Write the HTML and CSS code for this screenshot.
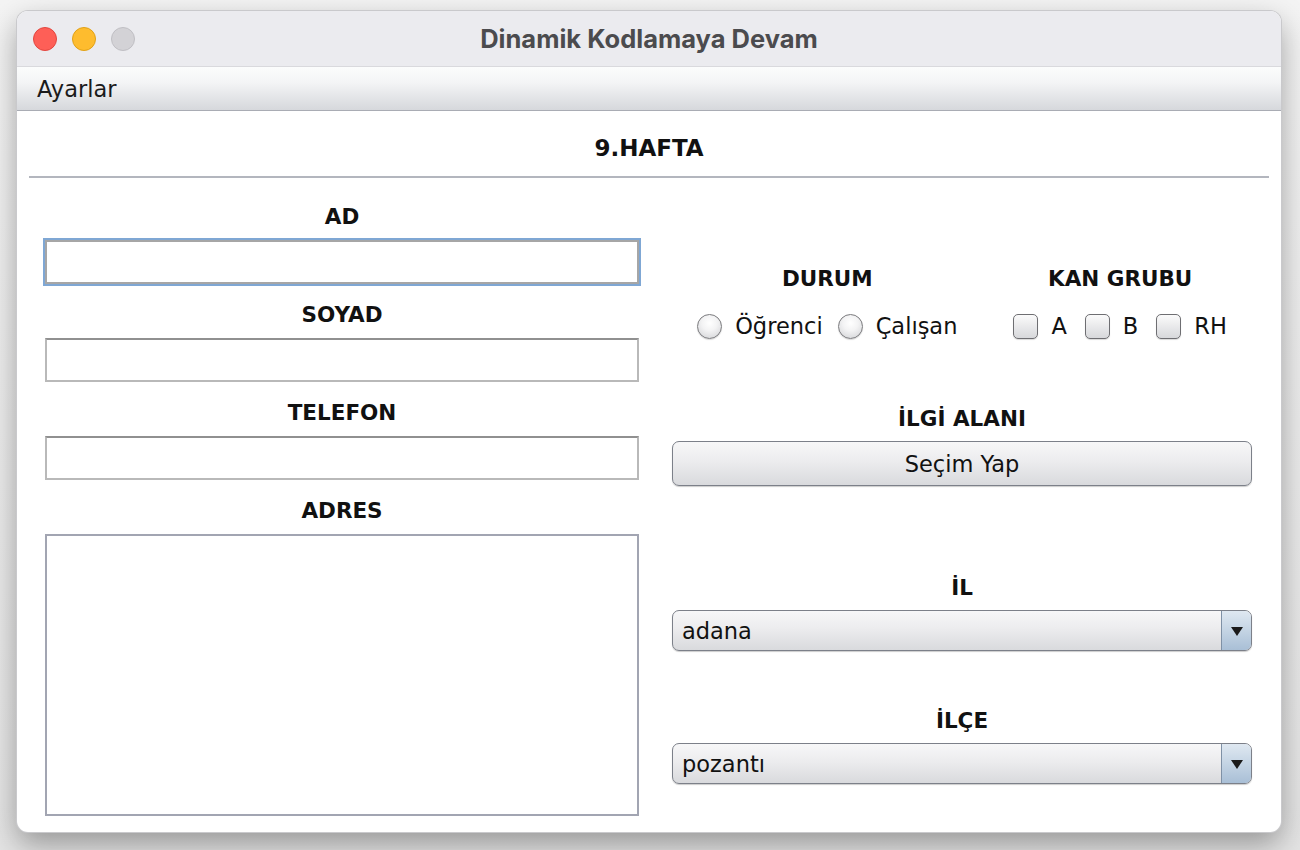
FILE: index.html
```html
<!DOCTYPE html>
<html lang="tr">
<head>
<meta charset="utf-8">
<title>Dinamik Kodlamaya Devam</title>
<link rel="stylesheet" href="styles.css">
</head>
<body>
<div class="window">
  <div class="titlebar">
    <div class="lights">
      <span class="light red"></span>
      <span class="light yellow"></span>
      <span class="light grey"></span>
    </div>
    <div class="title">Dinamik Kodlamaya Devam</div>
  </div>
  <div class="menubar"><span class="menu">Ayarlar</span></div>
  <div class="content">
    <div class="heading">9.HAFTA</div>
    <div class="rule"></div>
    <div class="grid">
      <div class="left">
        <div class="label">AD</div>
        <div class="field focused"></div>
        <div class="label">SOYAD</div>
        <div class="field"></div>
        <div class="label">TELEFON</div>
        <div class="field"></div>
        <div class="label">ADRES</div>
        <div class="area"></div>
      </div>
      <div class="right">
        <div class="groups">
          <div class="group">
            <div class="label">DURUM</div>
            <div class="opts">
              <span class="opt"><span class="radio"></span>Öğrenci</span>
              <span class="opt"><span class="radio"></span>Çalışan</span>
            </div>
          </div>
          <div class="group">
            <div class="label">KAN GRUBU</div>
            <div class="opts">
              <span class="opt"><span class="check"></span>A</span>
              <span class="opt"><span class="check"></span>B</span>
              <span class="opt"><span class="check"></span>RH</span>
            </div>
          </div>
        </div>
        <div class="label ilgi">İLGİ ALANI</div>
        <div class="button">Seçim Yap</div>
        <div class="label il">İL</div>
        <div class="combo"><span class="val">adana</span><span class="arrow"></span></div>
        <div class="label ilce">İLÇE</div>
        <div class="combo"><span class="val">pozantı</span><span class="arrow"></span></div>
      </div>
    </div>
  </div>
</div>
</body>
</html>
```
FILE: styles.css
```css
html, body {
  margin: 0;
  height: 100%;
}
body {
  background: linear-gradient(#f4f4f4, #e4e4e4);
  padding: 11px 19px 0 17px;
  box-sizing: border-box;
  font-family: "DejaVu Sans", "Liberation Sans", sans-serif;
  color: #111;
}
.window {
  width: 1264px;
  height: 821px;
  border-radius: 11px;
  overflow: hidden;
  background: #fff;
  box-shadow: 0 0 0 1px #c9c9cc, 0 12px 30px rgba(0,0,0,0.35);
  display: flex;
  flex-direction: column;
}
.titlebar {
  height: 55px;
  background: #ebebef;
  border-bottom: 1px solid #d9d9dd;
  display: flex;
  align-items: center;
  position: relative;
}
.lights {
  display: flex;
  gap: 15px;
  padding-left: 16px;
}
.light {
  width: 24px;
  height: 24px;
  border-radius: 50%;
  box-sizing: border-box;
}
.light.red { background: #fe5f57; border: 1px solid #e2463f; }
.light.yellow { background: #febc2e; border: 1px solid #e1a116; }
.light.grey { background: #d3d2d6; border: 1px solid #c0bfc4; }
.title {
  position: absolute;
  left: 0;
  right: 0;
  text-align: center;
  font-family: Inter, "DejaVu Sans", sans-serif;
  font-weight: bold;
  font-size: 25.5px;
  color: #4b4b4e;
  pointer-events: none;
}
.menubar {
  height: 43px;
  background: linear-gradient(#fbfcfc 0%, #f4f5f6 35%, #d6d8dc 100%);
  border-bottom: 1px solid #a9acb4;
  display: flex;
  align-items: center;
  padding-left: 20px;
}
.menu {
  font-size: 22.5px;
  color: #1b1b1b;
}
.content {
  flex: 1;
  display: flex;
  flex-direction: column;
}
.heading {
  text-align: center;
  font-weight: bold;
  font-size: 23px;
  line-height: 26px;
  padding-top: 24px;
  height: 65px;
  box-sizing: border-box;
}
.rule {
  height: 2px;
  background: #b3b6be;
  margin: 0 12px;
}
.grid {
  display: grid;
  grid-template-columns: 594px 580px;
  column-gap: 33px;
  padding: 0 29px 16px 28px;
  flex: 1;
}
.label {
  text-align: center;
  font-weight: bold;
  font-size: 21.5px;
  line-height: 24px;
}
.left {
  display: flex;
  flex-direction: column;
  padding-top: 27px;
}
.left .label {
  margin-bottom: 11px;
}
.field {
  height: 44px;
  box-sizing: border-box;
  border: 2px solid #b9b9b9;
  border-top-color: #909090;
  background: #fff;
  margin-bottom: 19px;
}
.field.focused {
  box-shadow: 0 0 0 2px #7fa7d4;
  border-color: #a6a6a6;
}
.area {
  flex: 1;
  border: 2px solid #a2a5b2;
  box-sizing: border-box;
}
.right {
  display: flex;
  flex-direction: column;
  padding-top: 89px;
}
.groups {
  display: flex;
  justify-content: center;
  gap: 56px;
}
.group .label {
  margin-bottom: 22px;
}
.opts {
  display: flex;
  gap: 15px;
  font-size: 22.5px;
  line-height: 26px;
}
.group + .group .opts {
  gap: 18px;
}
.opt {
  display: flex;
  align-items: center;
  gap: 13px;
}
.radio {
  width: 25px;
  height: 25px;
  border-radius: 50%;
  box-sizing: border-box;
  border: 1px solid #7b7b7e;
  background: radial-gradient(circle at 50% 35%, #ffffff 0%, #f3f3f4 40%, #cfd0d3 100%);
  box-shadow: 0 1px 1px rgba(0,0,0,0.15);
}
.check {
  width: 25px;
  height: 25px;
  border-radius: 5px;
  box-sizing: border-box;
  border: 1px solid #6e6e72;
  background: linear-gradient(#fbfbfb, #e9e9eb 50%, #d7d8db);
  box-shadow: 0 1px 1px rgba(0,0,0,0.15);
}
.label.ilgi {
  margin-top: 68px;
  margin-bottom: 10px;
}
.button {
  height: 45px;
  box-sizing: border-box;
  border: 1px solid #7c8089;
  border-radius: 7px;
  background: linear-gradient(#f7f7f8, #ececee 45%, #d9dadd);
  box-shadow: 0 1px 1px rgba(0,0,0,0.2);
  display: flex;
  align-items: center;
  justify-content: center;
  font-size: 22.5px;
  color: #111;
}
.label.il {
  margin-top: 90px;
  margin-bottom: 10px;
}
.label.ilce {
  margin-top: 58px;
  margin-bottom: 10px;
}
.combo {
  height: 41px;
  box-sizing: border-box;
  border: 1px solid #7c8089;
  border-radius: 7px;
  background: linear-gradient(#f7f7f8, #ececee 45%, #d9dadd);
  box-shadow: 0 1px 1px rgba(0,0,0,0.2);
  display: flex;
  align-items: stretch;
  overflow: hidden;
  font-size: 22.5px;
}
.combo .val {
  flex: 1;
  display: flex;
  align-items: center;
  padding-left: 9px;
}
.combo .arrow {
  width: 29px;
  border-left: 1px solid #7f91a6;
  background: linear-gradient(#dfe8f1, #c4d4e4 50%, #a9bfd6);
  position: relative;
}
.combo .arrow::after {
  content: "";
  position: absolute;
  left: 50%;
  top: 50%;
  margin-left: -6px;
  margin-top: -4px;
  border-left: 6px solid transparent;
  border-right: 6px solid transparent;
  border-top: 9px solid #1a1a1a;
}
```
